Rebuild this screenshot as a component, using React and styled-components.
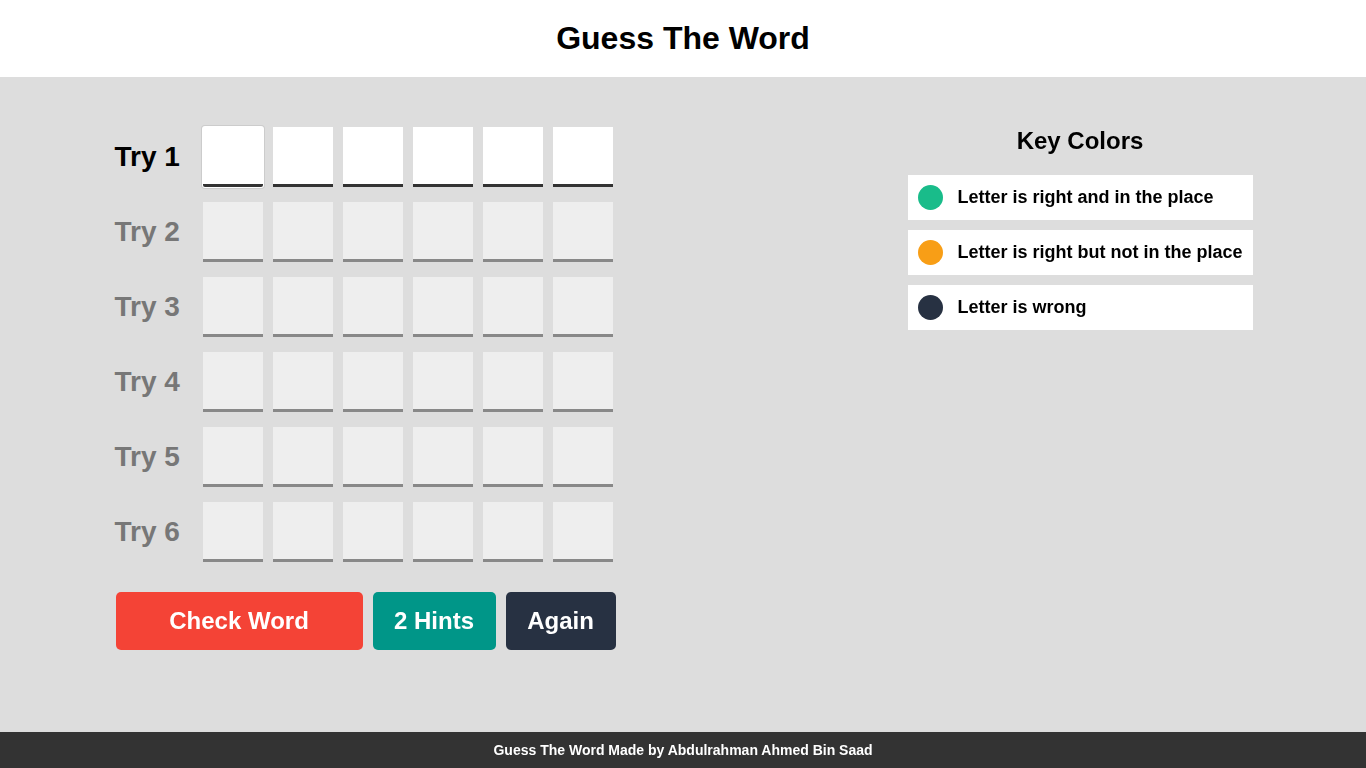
import React from "react";
import styled, { createGlobalStyle } from "styled-components";

const GlobalStyle = createGlobalStyle`
  * { box-sizing: border-box; }
  body {
    margin: 0;
    font-family: "Liberation Sans", Arial, sans-serif;
    background-color: #ddd;
  }
`;

const Page = styled.div`
  min-height: 100vh;
  display: flex;
  flex-direction: column;
`;

const Header = styled.h1`
  margin: 0;
  height: 77px;
  background-color: #fff;
  display: flex;
  align-items: center;
  justify-content: center;
  font-size: 32px;
  font-weight: bold;
  color: #000;
`;

const Main = styled.main`
  flex: 1;
  width: 1139px;
  margin: 0 auto;
  padding-top: 50px;
  display: flex;
  justify-content: space-between;
  align-items: flex-start;
`;

const Game = styled.div`
  display: flex;
  flex-direction: column;
  padding-left: 1px;
`;

const Row = styled.div`
  display: flex;
  align-items: center;
  margin-bottom: 15px;
`;

const Label = styled.span`
  width: 88px;
  font-size: 28px;
  font-weight: bold;
  color: ${(p) => (p.$active ? "#000" : "#777")};
`;

const Letters = styled.div`
  display: flex;
  gap: 10px;
`;

const Letter = styled.input`
  width: 60px;
  height: 60px;
  border: none;
  border-bottom: 3px solid ${(p) => (p.disabled ? "#888" : "#333")};
  background-color: ${(p) => (p.disabled ? "#eee" : "#fff")};
  outline: none;
  font-size: 40px;
  text-align: center;
  font-family: inherit;
  &:focus {
    box-shadow: 0 0 0 1px #fff, 0 0 0 2px #ccc;
    border-radius: 2px;
  }
`;

const Controls = styled.div`
  margin-top: 15px;
  margin-left: 1px;
  display: flex;
  gap: 10px;
`;

const Button = styled.button`
  width: ${(p) => p.$w}px;
  height: 58px;
  padding: 0;
  border: none;
  border-radius: 5px;
  background-color: ${(p) => p.$bg};
  color: #fff;
  font-family: inherit;
  font-size: 24px;
  font-weight: bold;
  cursor: pointer;
`;

const KeyColors = styled.div`
  width: 345px;
`;

const KeyTitle = styled.h2`
  margin: 0 0 20px;
  line-height: 28px;
  font-size: 24px;
  text-align: center;
  color: #000;
`;

const KeyItem = styled.div`
  display: flex;
  align-items: center;
  background-color: #fff;
  padding: 10px;
  margin-bottom: 10px;
`;

const Dot = styled.span`
  width: 25px;
  height: 25px;
  border-radius: 50%;
  background-color: ${(p) => p.$color};
  margin-right: 15px;
  flex-shrink: 0;
`;

const KeyText = styled.span`
  font-size: 18px;
  font-weight: bold;
  color: #000;
`;

const Footer = styled.footer`
  height: 36px;
  background-color: #333;
  color: #fff;
  display: flex;
  align-items: center;
  justify-content: center;
  font-size: 14px;
  font-weight: bold;
`;

const keys = [
  { color: "#19bc8a", text: "Letter is right and in the place" },
  { color: "#f89e16", text: "Letter is right but not in the place" },
  { color: "#273142", text: "Letter is wrong" },
];

export default function App() {
  const tries = [1, 2, 3, 4, 5, 6];
  return (
    <Page>
      <GlobalStyle />
      <Header>Guess The Word</Header>
      <Main>
        <Game>
          {tries.map((t) => (
            <Row key={t}>
              <Label $active={t === 1}>Try {t}</Label>
              <Letters>
                {[0, 1, 2, 3, 4, 5].map((i) => (
                  <Letter
                    key={i}
                    maxLength={1}
                    disabled={t !== 1}
                    autoFocus={t === 1 && i === 0}
                  />
                ))}
              </Letters>
            </Row>
          ))}
          <Controls>
            <Button $w={247} $bg="#f44336">Check Word</Button>
            <Button $w={123} $bg="#009688">2 Hints</Button>
            <Button $w={110} $bg="#273142">Again</Button>
          </Controls>
        </Game>
        <KeyColors>
          <KeyTitle>Key Colors</KeyTitle>
          {keys.map((k) => (
            <KeyItem key={k.text}>
              <Dot $color={k.color} />
              <KeyText>{k.text}</KeyText>
            </KeyItem>
          ))}
        </KeyColors>
      </Main>
      <Footer>Guess The Word Made by Abdulrahman Ahmed Bin Saad</Footer>
    </Page>
  );
}
